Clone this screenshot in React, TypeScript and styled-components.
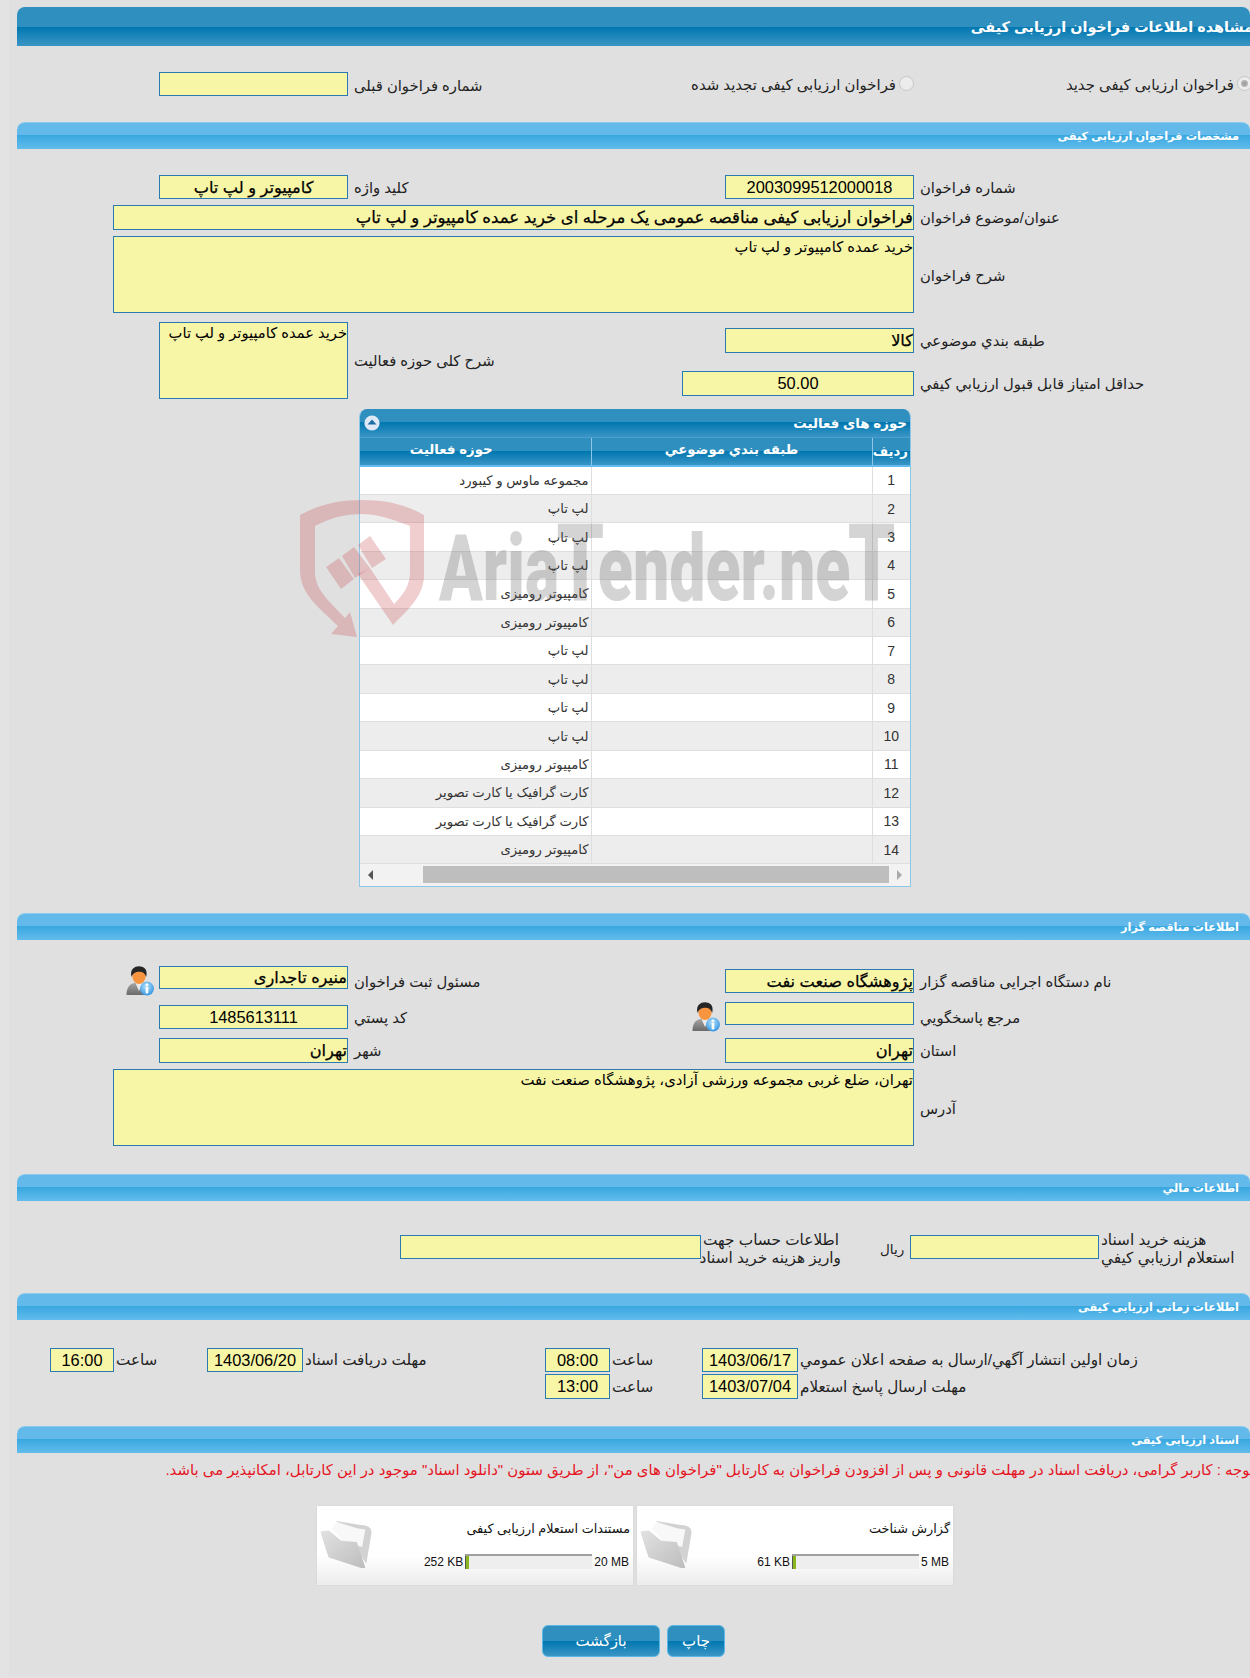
import styled, { createGlobalStyle } from "styled-components";

/////////////////////////////////////////////////////////////////////////////STYLE
const GlobalStyle = createGlobalStyle`
  html, body {
    margin: 0;
    padding: 0;
    background: #e3e3e3;
    overflow: hidden;
  }
`;

const FONT = `"Liberation Sans", "DejaVu Sans", sans-serif`;

const Wrapper = styled.div`
  position: relative;
  width: 1241px;
  height: 1676px;
  margin-left: 9px;
  padding: 7px 0 0 8px;
  box-sizing: border-box;
  background: #e0e0e0;
  font-family: ${FONT};
  font-size: 14.8px;
  color: #222;
`;

const Page = styled.div`
  direction: rtl;
  width: 1233px;
`;

const MainHeader = styled.h1`
  height: 39px;
  margin: 0;
  padding: 0;
  box-sizing: border-box;
  border-radius: 8px 8px 0 0;
  background: linear-gradient(#2f8fbe 0, #2f8fbe 51%, #0077b0 51%, #3b95c5 100%);
  color: #fff;
  font-size: 14.4px;
  font-weight: bold;
  line-height: 40px;
  white-space: nowrap;
  text-indent: -3px;
`;

const SectionHeader = styled.h2<{ $mt: number }>`
  height: 27px;
  margin: ${({ $mt }) => $mt}px 0 0 0;
  padding: 0 11px 0 0;
  border-top: 1px solid #8acbef;
  box-sizing: border-box;
  border-radius: 8px 8px 0 0;
  background: linear-gradient(#63b9e9 0, #63b9e9 48%, #3aa8e0 48%, #62bcec 100%);
  color: #fff;
  font-size: 11.3px;
  font-weight: bold;
  line-height: 26px;
  white-space: nowrap;
`;

const FormRow = styled.div<{ $mt: number; $h: number }>`
  display: grid;
  grid-template-columns: 336px 200px 366px 1fr;
  align-items: start;
  height: ${({ $h }) => $h}px;
  margin-top: ${({ $mt }) => $mt}px;
`;

const SplitRow = styled(FormRow)`
  grid-template-rows: 43px 34px;
`;

const Label = styled.div<{ $span?: boolean; $mt?: number; $h?: number }>`
  align-self: ${({ $span, $h }) => ($span ? "center" : $h ? "start" : "stretch")};
  display: flex;
  align-items: center;
  justify-content: flex-end;
  ${({ $span }) => ($span ? "grid-row: 1 / 3; grid-column: 3;" : "")}
  ${({ $h }) => ($h ? `height: ${$h}px;` : "")}
  margin-top: ${({ $mt }) => $mt ?? 0}px;
  padding-left: 6px;
  font-size: 14.8px;
  white-space: nowrap;
`;

const Box = styled.div<{
  $w: number;
  $h?: number;
  $mt?: number;
  $center?: boolean;
  $top?: boolean;
  $size?: number;
  $strong?: boolean;
}>`
  display: flex;
  flex: none;
  align-items: ${({ $top }) => ($top ? "flex-start" : "center")};
  justify-content: ${({ $center }) => ($center ? "center" : "flex-start")};
  width: ${({ $w }) => $w}px;
  height: ${({ $h }) => $h ?? 24}px;
  margin-top: ${({ $mt }) => $mt ?? 0}px;
  box-sizing: border-box;
  border: 1px solid #2a7cb0;
  background: #f7f5a6;
  color: #000;
  font-size: ${({ $size }) => $size ?? 16.4}px;
  white-space: nowrap;
  overflow: hidden;
  ${({ $strong }) => ($strong ? "-webkit-text-stroke: 0.25px #000;" : "")}
  ${({ $top }) => ($top ? "padding-top: 1px;" : "")}
`;

const WideCell = styled.div`
  grid-column: 2 / 5;
`;

const LeftCell = styled.div<{ $tall?: boolean }>`
  grid-column: 4;
  ${({ $tall }) => ($tall ? "grid-row: 1 / 3;" : "")}
  display: flex;
  align-items: flex-start;
  gap: 5px;
`;

const InfoCell = styled.div`
  display: flex;
  align-items: flex-start;
  gap: 5px;
`;

const RadioCell = styled.label<{ $pull?: number }>`
  display: flex;
  align-items: flex-start;
  gap: 3px;
  margin-right: ${({ $pull }) => $pull ?? 0}px;
  font-size: 14.9px;
  white-space: nowrap;
`;

const RadioDot = styled.span<{ $checked?: boolean }>`
  flex: none;
  width: 15px;
  height: 15px;
  margin-top: 4px;
  border: 1px solid #c6c6c6;
  border-radius: 50%;
  box-sizing: border-box;
  background: ${({ $checked }) =>
    $checked
      ? "radial-gradient(circle, #9a9a9a 0, #b4b4b4 3px, #ececec 4px)"
      : "#ececec"};
`;

const RadioText = styled.span`
  line-height: 26px;
  margin-top: 0;
`;

const Panel = styled.div`
  width: 552px;
  height: 478px;
  margin: 10px 339px 0 0;
  box-sizing: border-box;
  border-radius: 8px 8px 0 0;
  border: 1px solid #8ec6e8;
  border-top: 0;
  overflow: hidden;
`;

const PanelTitle = styled.div`
  display: flex;
  align-items: center;
  justify-content: space-between;
  height: 29px;
  padding: 0 3px 0 4px;
  border-bottom: 1px solid #4a9fd0;
  box-sizing: border-box;
  background: linear-gradient(#2f8fbe 0, #2f8fbe 48%, #0077b0 48%, #3b95c5 100%);
  color: #fff;
  font-size: 13.4px;
  font-weight: bold;
`;

const Table = styled.table`
  width: 550px;
  table-layout: fixed;
  border-collapse: collapse;
`;

const HeadCell = styled.th<{ $w?: number; $pr?: number; $pb?: number }>`
  width: ${({ $w }) => ($w ? `${$w}px` : "auto")};
  height: 28px;
  padding: 0 ${({ $pr }) => $pr ?? 2}px ${({ $pb }) => $pb ?? 4}px 2px;
  box-sizing: border-box;
  border-left: 1px solid #8ec6e8;
  border-bottom: 2px solid #62bcec;
  background: linear-gradient(#2f8fbe 0, #2f8fbe 50%, #0077b0 50%, #3b95c5 100%);
  color: #fff;
  font-size: 13.3px;
  font-weight: bold;
  text-align: center;
  &:last-child {
    border-left: 0;
  }
`;

const BodyRow = styled.tr<{ $odd: boolean }>`
  height: 28.43px;
  background: ${({ $odd }) => ($odd ? "#fff" : "#eeeded")};
`;

const Cell = styled.td<{ $num?: boolean }>`
  padding: 0 ${({ $num }) => ($num ? 3 : 2)}px;
  border-left: 1px solid #dedede;
  border-bottom: 1px solid #dedede;
  color: #333;
  font-size: ${({ $num }) => ($num ? 14 : 13.2)}px;
  text-align: ${({ $num }) => ($num ? "center" : "right")};
  white-space: nowrap;
  &:last-child {
    border-left: 0;
  }
`;

const ScrollTrack = styled.div`
  direction: ltr;
  display: flex;
  align-items: center;
  height: 24px;
  padding: 0 0 3px 8px;
  box-sizing: border-box;
  background: #f2f2f2;
`;

const ScrollArrow = styled.span<{ $dir: "left" | "right" }>`
  flex: none;
  width: 0;
  height: 0;
  border-top: 5px solid transparent;
  border-bottom: 5px solid transparent;
  ${({ $dir }) =>
    $dir === "left"
      ? "border-right: 5px solid #555;"
      : "border-left: 5px solid #aaa; margin-left: 8px;"}
`;

const ScrollThumb = styled.span`
  flex: none;
  width: 466px;
  height: 17px;
  margin-left: 50px;
  background: #bebebe;
`;

const MoneyRow = styled.div`
  display: flex;
  align-items: center;
  height: 37px;
  margin-top: 29px;
`;

const MoneyLabel = styled.div<{ $w: number; $mr?: number }>`
  flex: none;
  width: ${({ $w }) => $w}px;
  margin-right: ${({ $mr }) => $mr ?? 0}px;
  padding-left: 2px;
  box-sizing: border-box;
  font-size: 15.3px;
  line-height: 18px;
  text-align: left;
  white-space: nowrap;
`;

const Rial = styled.span`
  width: 30px;
  flex: none;
  font-size: 13.5px;
  text-align: left;
`;

const TimeGrid = styled.div`
  display: grid;
  grid-template-columns: 452px 96px 92px 65px 242px 96px 93px 64px;
  grid-auto-rows: auto;
  row-gap: 2px;
  align-items: center;
  margin-top: 28px;
`;

const TimeLabel = styled.div`
  padding-left: 2px;
  font-size: 15.2px;
  text-align: left;
  white-space: nowrap;
`;

const Notice = styled.p`
  height: 20px;
  margin: 7px -4px 0 0;
  color: #e5141f;
  font-size: 14.9px;
  line-height: 20px;
  white-space: nowrap;
`;

const Cards = styled.div`
  display: flex;
  gap: 4px;
  height: 79px;
  margin: 26px 297px 0 0;
`;

const Card = styled.div`
  display: flex;
  flex: none;
  width: 316px;
  height: 79px;
  box-sizing: border-box;
  background: linear-gradient(#fff 62%, #ececec 100%);
  box-shadow: 0 0 2px #cfcfcf;
`;

const CardBody = styled.div`
  flex: 1;
  padding: 14px 3px 0 0;
`;

const CardTitle = styled.div`
  height: 18px;
  color: #111;
  font-size: 12.8px;
  line-height: 18px;
  white-space: nowrap;
`;

const Meter = styled.div`
  display: flex;
  align-items: center;
  gap: 2px;
  margin: 16px 1px 0 0;
  color: #111;
  font-size: 12px;
`;

const MeterMax = styled.span`
  white-space: nowrap;
  direction: ltr;
`;

const MeterBar = styled.div`
  direction: ltr;
  flex: none;
  width: 127px;
  height: 15px;
  box-sizing: border-box;
  border-top: 2px solid #a0a0a0;
  background: #eeeeee;
`;

const MeterFill = styled.div`
  width: 4px;
  height: 100%;
  box-sizing: border-box;
  border-left: 1px solid #555;
  background: #8ab51e;
`;

const MeterUsed = styled.span`
  white-space: nowrap;
  direction: ltr;
`;

const FolderWrap = styled.div`
  flex: none;
  width: 58px;
  padding: 14px 2px 0 1px;
  box-sizing: border-box;
`;

const Buttons = styled.div`
  display: flex;
  gap: 7px;
  margin: 40px 525px 0 0;
`;

const ActionButton = styled.button<{ $w: number }>`
  width: ${({ $w }) => $w}px;
  height: 32px;
  padding: 0;
  border: 1px solid #5bb8e6;
  border-radius: 6px;
  background: linear-gradient(#2f8fbe 0, #2f8fbe 50%, #0077b0 50%, #3b95c5 100%);
  color: #fff;
  font-family: ${FONT};
  font-size: 15px;
`;

const Watermark = styled.div`
  position: absolute;
  left: 281px;
  top: 490px;
  width: 620px;
  height: 160px;
  pointer-events: none;
`;

const ShieldSvg = styled.svg`
  position: absolute;
  left: 0;
  top: 0;
`;

const WatermarkText = styled.span`
  position: absolute;
  left: 149px;
  top: 8px;
  color: rgba(90, 90, 90, 0.26);
  font-family: "Roboto", sans-serif;
  font-size: 92px;
  font-weight: 900;
  line-height: 130px;
  white-space: nowrap;
  transform: scaleX(0.7);
  transform-origin: left center;
`;

const TallLetter = styled.span`
  margin: 0 -9px 0 -4px;
  font-size: 108px;
`;

const PersonSvg = styled.svg`
  flex: none;
`;

/////////////////////////////////////////////////////////////////////////////DRAWINGS
function PersonInfo() {
  return (
    <PersonSvg width="28" height="30" viewBox="0 0 28 30">
      <defs>
        <linearGradient id="suit" x1="0" y1="0" x2="0" y2="1">
          <stop offset="0" stopColor="#a4a4a4" />
          <stop offset="1" stopColor="#6a6a6a" />
        </linearGradient>
        <radialGradient id="info" cx="0.45" cy="0.35" r="0.7">
          <stop offset="0" stopColor="#b6e2fb" />
          <stop offset="1" stopColor="#2a8fe0" />
        </radialGradient>
      </defs>
      <path d="M0.5 29 C0.5 22 3 18.5 8 17 L18 17 C22 18.5 24 22 24 29 Z" fill="url(#suit)" />
      <path d="M9.5 17 L13 25 L16.5 17 Z" fill="#ececec" />
      <ellipse cx="13" cy="10.5" rx="6.6" ry="7.5" fill="#f7943f" />
      <path d="M5.5 11 C3.5 3 9 0 14 0.4 C20 0.8 21.5 5 20.2 11 C19 7 16 5.2 12 5.8 C9 6.2 6.8 7.5 5.5 11 Z" fill="#262626" />
      <circle cx="21" cy="22.6" r="7" fill="url(#info)" />
      <circle cx="21" cy="18.8" r="1.4" fill="#fff" />
      <rect x="19.7" y="21" width="2.6" height="6.4" fill="#fff" />
    </PersonSvg>
  );
}

function CollapseIcon() {
  return (
    <svg width="16" height="16" viewBox="0 0 16 16">
      <circle cx="8" cy="8" r="7.6" fill="#dfe9f5" />
      <path d="M3.5 9.5 L8 4.5 L12.5 9.5 Z" fill="#1c6fa5" />
    </svg>
  );
}

function Folder() {
  return (
    <svg width="55" height="50" viewBox="0 0 52 48">
      <defs>
        <linearGradient id="leaf" x1="0" y1="0" x2="1" y2="1">
          <stop offset="0" stopColor="#e2e2e2" />
          <stop offset="1" stopColor="#bdbdbd" />
        </linearGradient>
      </defs>
      <path d="M17 1 L42 5 C47 5 51 7 51 12 L46 42 L38 30 Z" fill="#d2d2d2" />
      <path d="M13 8 L18 2 L37 8 L45 9 L42 26 L24 21 Z" fill="#f8f8f8" />
      <path d="M2 11 L10 10 L22 20 L37 21 C39 30 44 40 45 46 L41 46 L10 36 C7 28 4 18 2 11 Z" fill="url(#leaf)" />
    </svg>
  );
}

function ShieldMark() {
  return (
    <ShieldSvg width="144" height="160" viewBox="0 0 144 160">
      <g fill="rgba(200, 80, 85, 0.28)">
        <path d="M10 25 C30 14 50 10 72 10 C95 10 115 14 134 25 L134 85 C134 105 120 118 103 135 L68 84 L80 78 L104 114 C114 104 120 95 120 82 L120 36 C100 28 85 24 72 24 C55 24 40 28 25 36 L25 82 C25 100 40 112 55 128 L60 122 L67 147 L41 144 L48 136 C30 118 10 105 10 80 Z" />
        <path d="M36 77 L49 68 L64 89 L51 99 Z" />
        <path d="M52 66 L64 57 L80 78 L65 88 Z" />
        <path d="M68 55 L80 46 L96 69 L82 78 Z" />
      </g>
    </ShieldSvg>
  );
}

/////////////////////////////////////////////////////////////////////////////DATA
const activityRows = [
  "مجموعه ماوس و کیبورد",
  "لپ تاپ",
  "لپ تاپ",
  "لپ تاپ",
  "کامپیوتر رومیزی",
  "کامپیوتر رومیزی",
  "لپ تاپ",
  "لپ تاپ",
  "لپ تاپ",
  "لپ تاپ",
  "کامپیوتر رومیزی",
  "کارت گرافیک یا کارت تصویر",
  "کارت گرافیک یا کارت تصویر",
  "کامپیوتر رومیزی",
];

const PERSIAN = 16.2;
const PLAIN = 14.7;

/////////////////////////////////////////////////////////////////////////////COMPONENT
function DocCard({ title, max, used }: { title: string; max: string; used: string }) {
  return (
    <Card>
      <CardBody>
        <CardTitle>{title}</CardTitle>
        <Meter>
          <MeterMax>{max}</MeterMax>
          <MeterBar>
            <MeterFill />
          </MeterBar>
          <MeterUsed>{used}</MeterUsed>
        </Meter>
      </CardBody>
      <FolderWrap>
        <Folder />
      </FolderWrap>
    </Card>
  );
}

function App() {
  return (
    <Wrapper>
      <GlobalStyle />
      <Page>
        <MainHeader>مشاهده اطلاعات فراخوان ارزیابی کیفی</MainHeader>

        <FormRow $mt={26} $h={24}>
          <RadioCell $pull={-2}>
            <RadioDot $checked />
            <RadioText>فراخوان ارزیابی کیفی جدید</RadioText>
          </RadioCell>
          <RadioCell>
            <RadioDot />
            <RadioText>فراخوان ارزیابی کیفی تجدید شده</RadioText>
          </RadioCell>
          <Label>شماره فراخوان قبلی</Label>
          <LeftCell>
            <Box $w={189} />
          </LeftCell>
        </FormRow>

        <SectionHeader $mt={26}>مشخصات فراخوان ارزیابی کیفی</SectionHeader>

        <FormRow $mt={26} $h={24}>
          <Label>شماره فراخوان</Label>
          <Box $w={189} $center>2003099512000018</Box>
          <Label>کلید واژه</Label>
          <LeftCell>
            <Box $w={189} $center $size={PERSIAN} $strong>کامپیوتر و لپ تاپ</Box>
          </LeftCell>
        </FormRow>
        <FormRow $mt={6} $h={25}>
          <Label>عنوان/موضوع فراخوان</Label>
          <WideCell>
            <Box $w={801} $h={25} $size={16.5} $strong>فراخوان ارزیابی کیفی مناقصه عمومی یک مرحله ای خرید عمده کامپیوتر و لپ تاپ</Box>
          </WideCell>
        </FormRow>
        <FormRow $mt={6} $h={77}>
          <Label $mt={2}>شرح فراخوان</Label>
          <WideCell>
            <Box $w={801} $h={77} $top $size={PLAIN}>خرید عمده کامپیوتر و لپ تاپ</Box>
          </WideCell>
        </FormRow>
        <SplitRow $mt={9} $h={77}>
          <Label $mt={6} $h={25}>طبقه بندي موضوعي</Label>
          <Box $w={189} $h={25} $mt={6} $size={PERSIAN} $strong>کالا</Box>
          <Label $span>شرح کلی حوزه فعالیت</Label>
          <LeftCell $tall>
            <Box $w={189} $h={77} $top $size={PLAIN}>خرید عمده کامپیوتر و لپ تاپ</Box>
          </LeftCell>
          <Label $mt={6} $h={25}>حداقل امتياز قابل قبول ارزيابي كيفي</Label>
          <Box $w={232} $h={25} $mt={6} $center>50.00</Box>
        </SplitRow>

        <Panel>
          <PanelTitle>
            <span>حوزه های فعالیت</span>
            <CollapseIcon />
          </PanelTitle>
          <Table>
            <thead>
              <tr>
                <HeadCell $w={38} $pb={0}>رديف</HeadCell>
                <HeadCell $w={281}>طبقه بندي موضوعي</HeadCell>
                <HeadCell $pr={50}>حوزه فعالیت</HeadCell>
              </tr>
            </thead>
            <tbody>
              {activityRows.map((name, i) => (
                <BodyRow key={i} $odd={i % 2 === 0}>
                  <Cell $num>{i + 1}</Cell>
                  <Cell />
                  <Cell>{name}</Cell>
                </BodyRow>
              ))}
            </tbody>
          </Table>
          <ScrollTrack>
            <ScrollArrow $dir="left" />
            <ScrollThumb />
            <ScrollArrow $dir="right" />
          </ScrollTrack>
        </Panel>

        <SectionHeader $mt={26}>اطلاعات مناقصه گزار</SectionHeader>

        <FormRow $mt={26} $h={30}>
          <Label>نام دستگاه اجرایی مناقصه گزار</Label>
          <Box $w={189} $mt={3} $size={PERSIAN} $strong>پژوهشگاه صنعت نفت</Box>
          <Label>مسئول ثبت فراخوان</Label>
          <LeftCell>
            <Box $w={189} $h={23} $size={PERSIAN} $strong>منیره تاجداری</Box>
            <PersonInfo />
          </LeftCell>
        </FormRow>
        <FormRow $mt={6} $h={30}>
          <Label>مرجع پاسخگويي</Label>
          <InfoCell>
            <Box $w={189} $h={23} />
            <PersonInfo />
          </InfoCell>
          <Label>کد پستي</Label>
          <LeftCell>
            <Box $w={189} $mt={3} $center>1485613111</Box>
          </LeftCell>
        </FormRow>
        <FormRow $mt={6} $h={25}>
          <Label>استان</Label>
          <Box $w={189} $h={25} $size={PERSIAN} $strong>تهران</Box>
          <Label>شهر</Label>
          <LeftCell>
            <Box $w={189} $h={25} $size={PERSIAN} $strong>تهران</Box>
          </LeftCell>
        </FormRow>
        <FormRow $mt={6} $h={77}>
          <Label $mt={2}>آدرس</Label>
          <WideCell>
            <Box $w={801} $h={77} $top $size={14.9}>تهران، ضلع غربی مجموعه ورزشی آزادی، پژوهشگاه صنعت نفت</Box>
          </WideCell>
        </FormRow>

        <SectionHeader $mt={28}>اطلاعات مالي</SectionHeader>

        <MoneyRow>
          <MoneyLabel $w={151}>
            هزینه خرید اسناد
            <br />
            استعلام ارزيابي كيفي
          </MoneyLabel>
          <Box $w={189} $mt={-4} />
          <Rial>ریال</Rial>
          <MoneyLabel $w={140} $mr={39}>
            اطلاعات حساب جهت
            <br />
            واریز هزینه خرید اسناد
          </MoneyLabel>
          <Box $w={301} $mt={-4} />
        </MoneyRow>

        <SectionHeader $mt={26}>اطلاعات زمانی ارزیابی کیفی</SectionHeader>

        <TimeGrid>
          <TimeLabel>زمان اولین انتشار آگهي/ارسال به صفحه اعلان عمومي</TimeLabel>
          <Box $w={96} $center>1403/06/17</Box>
          <TimeLabel>ساعت</TimeLabel>
          <Box $w={65} $center>08:00</Box>
          <TimeLabel>مهلت دریافت اسناد</TimeLabel>
          <Box $w={96} $center>1403/06/20</Box>
          <TimeLabel>ساعت</TimeLabel>
          <Box $w={64} $center>16:00</Box>
          <TimeLabel>مهلت ارسال پاسخ استعلام</TimeLabel>
          <Box $w={96} $h={25} $center>1403/07/04</Box>
          <TimeLabel>ساعت</TimeLabel>
          <Box $w={65} $h={25} $center>13:00</Box>
        </TimeGrid>

        <SectionHeader $mt={27}>اسناد ارزیابی کیفی</SectionHeader>

        <Notice>
          توجه : کاربر گرامی، دریافت اسناد در مهلت قانونی و پس از افزودن فراخوان به کارتابل "فراخوان های من"، از طریق ستون "دانلود اسناد" موجود در این کارتابل، امکانپذیر می باشد.
        </Notice>

        <Cards>
          <DocCard title="گزارش شناخت" max="5 MB" used="61 KB" />
          <DocCard title="مستندات استعلام ارزیابی کیفی" max="20 MB" used="252 KB" />
        </Cards>

        <Buttons>
          <ActionButton $w={58}>چاپ</ActionButton>
          <ActionButton $w={118}>بازگشت</ActionButton>
        </Buttons>
      </Page>

      <Watermark>
        <ShieldMark />
        <WatermarkText>
          Aria<TallLetter>T</TallLetter>ender.ne<TallLetter>T</TallLetter>
        </WatermarkText>
      </Watermark>
    </Wrapper>
  );
}

export default App;
